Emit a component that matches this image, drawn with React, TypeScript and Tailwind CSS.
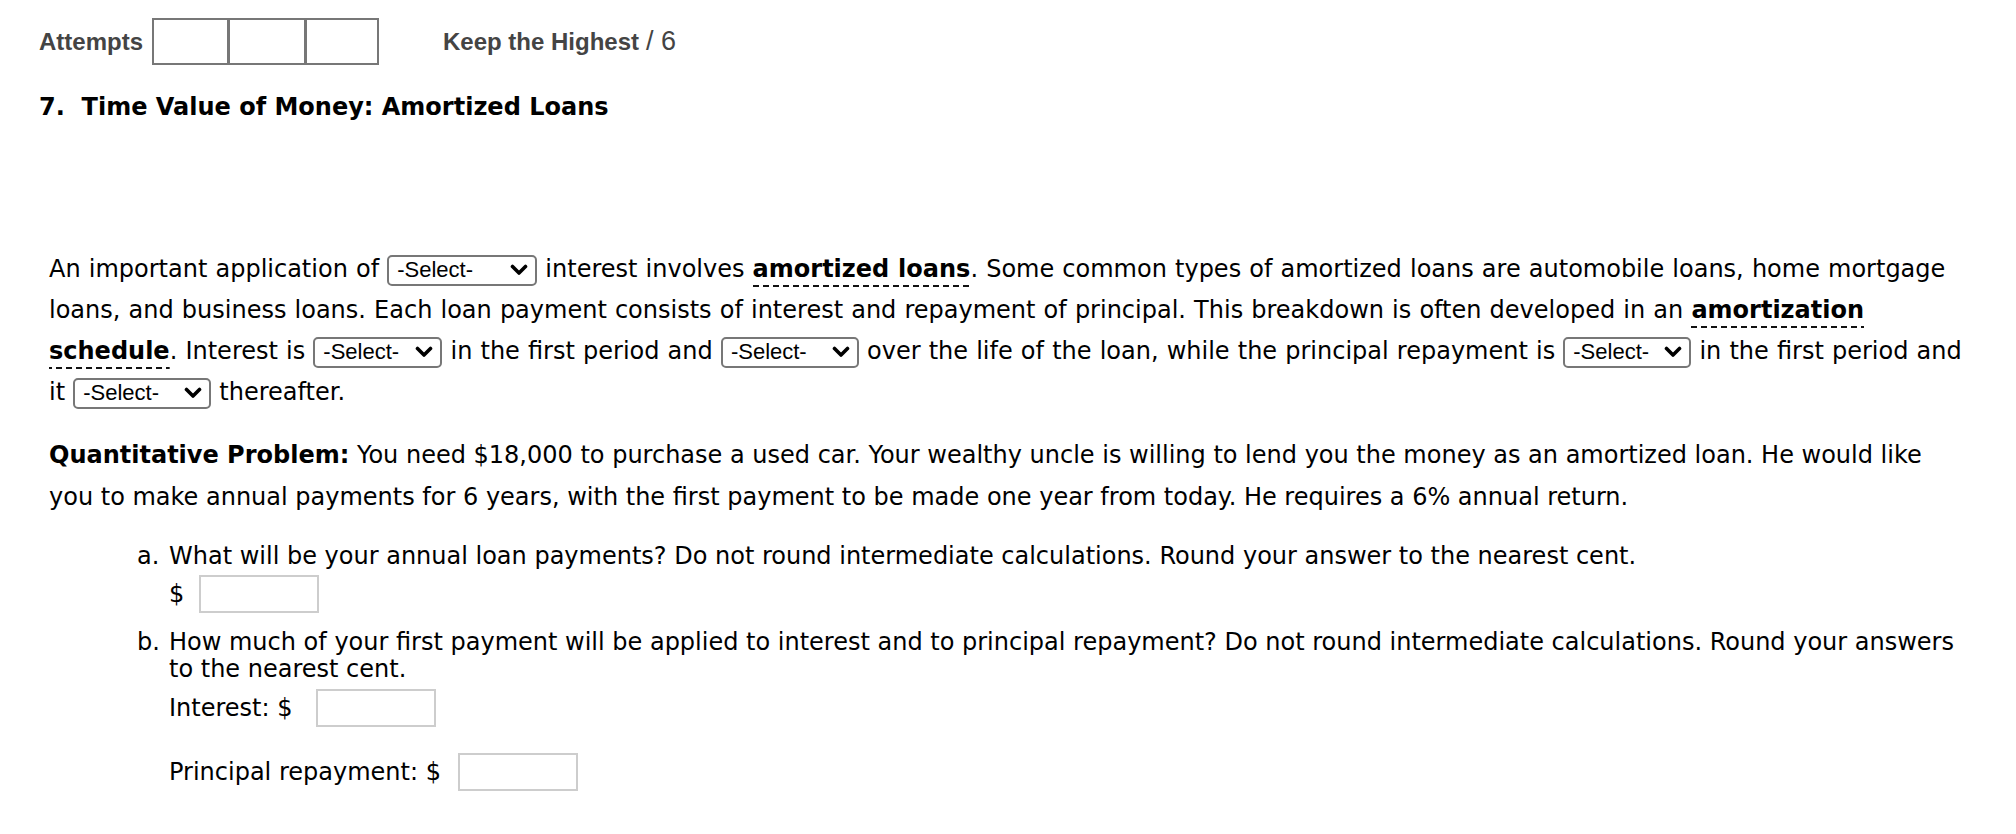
import React from "react";

function Select({ w }: { w: string }) {
  return (
    <span
      className={`inline-flex h-[31px] ${w} items-center justify-between rounded-[5px] border-2 border-[#777] bg-white pl-[8px] pr-[7px] align-middle font-['Liberation_Sans',Arial,sans-serif] text-[22px] leading-none text-black`}
    >
      <span>-Select-</span>
      <svg width="18" height="12" viewBox="0 0 18 12" className="shrink-0">
        <path d="M2.5 2.5 L9 9 L15.5 2.5" stroke="#000" strokeWidth="3.6" fill="none" strokeLinecap="round" strokeLinejoin="round" />
      </svg>
    </span>
  );
}

function Term({ children }: { children: React.ReactNode }) {
  return (
    <b className="bg-[repeating-linear-gradient(to_right,#111_0_6px,transparent_6px_10px)] bg-[length:100%_2px] bg-bottom bg-no-repeat pb-[4px] font-bold">
      {children}
    </b>
  );
}

function AnswerBox() {
  return <span className="inline-block h-[38px] w-[120px] border-2 border-[#cdcdcd] bg-white align-middle" />;
}

export default function App() {
  return (
    <div className="min-h-[834px] w-full bg-white font-['DejaVu_Sans',Verdana,sans-serif] text-black">
      <div className="flex items-center pl-[39px] pt-[18px] font-['Liberation_Sans',Arial,sans-serif] text-[#444]">
        <span className="text-[24px] font-bold">Attempts</span>
        <div className="ml-[9px] flex h-[47px] border-2 border-[#777]">
          <div className="w-[73px]" />
          <div className="w-[77px] border-l-[3px] border-[#777]" />
          <div className="w-[73px] border-l-[3px] border-[#777]" />
        </div>
        <span className="ml-[64px] text-[24px] font-bold">Keep the Highest</span>
        <span className="ml-[7px] text-[27px]">/ 6</span>
      </div>

      <h2 className="mt-[27px] pl-[39px] text-[24px] font-bold leading-[30px]">7.&nbsp; Time Value of Money: Amortized Loans</h2>

      <div className="mt-[127px] pl-[49px] pr-[44px] text-[24px]">
        <p className="leading-[41px] [word-spacing:0.5px]">
          An important application of <Select w="w-[150px]" /> interest involves <Term>amortized loans</Term>. Some
          common types of amortized loans are automobile loans, home mortgage loans, and business loans. Each loan
          payment consists of interest and repayment of principal. This breakdown is often developed in an{" "}
          <Term>amortization schedule</Term>. Interest is <Select w="w-[129px]" /> in the first period and{" "}
          <Select w="w-[138px]" /> over the life of the loan, while the principal repayment is{" "}
          <Select w="w-[128px]" /> in the first period and
          <br />
          it <Select w="w-[138px]" /> thereafter.
        </p>

        <p className="mt-[21px] leading-[42px]">
          <b>Quantitative Problem:</b> You need $18,000 to purchase a used car. Your wealthy uncle is willing to lend
          you the money as an amortized loan. He would like
          <br />
          you to make annual payments for 6 years, with the first payment to be made one year from today. He requires a
          6% annual return.
        </p>

        <div className="mt-[25px] pl-[88px] leading-[27px]">
          <div className="flex">
            <span className="w-[32px] shrink-0">a.</span>
            <div>
              <div>
                What will be your annual loan payments? Do not round intermediate calculations. Round your answer to the
                nearest cent.
              </div>
              <div className="mt-[5px] flex items-center">
                <span>$</span>
                <span className="ml-[15px]">
                  <AnswerBox />
                </span>
              </div>
            </div>
          </div>

          <div className="mt-[16px] flex">
            <span className="w-[32px] shrink-0">b.</span>
            <div>
              <div>
                How much of your first payment will be applied to interest and to principal repayment? Do not round
                intermediate calculations. Round your answers to the nearest cent.
              </div>
              <div className="mt-[6px] flex items-center">
                <span>Interest: $</span>
                <span className="ml-[24px]">
                  <AnswerBox />
                </span>
              </div>
              <div className="mt-[26px] flex items-center">
                <span>Principal repayment: $</span>
                <span className="ml-[17px]">
                  <AnswerBox />
                </span>
              </div>
            </div>
          </div>
        </div>
      </div>
    </div>
  );
}
